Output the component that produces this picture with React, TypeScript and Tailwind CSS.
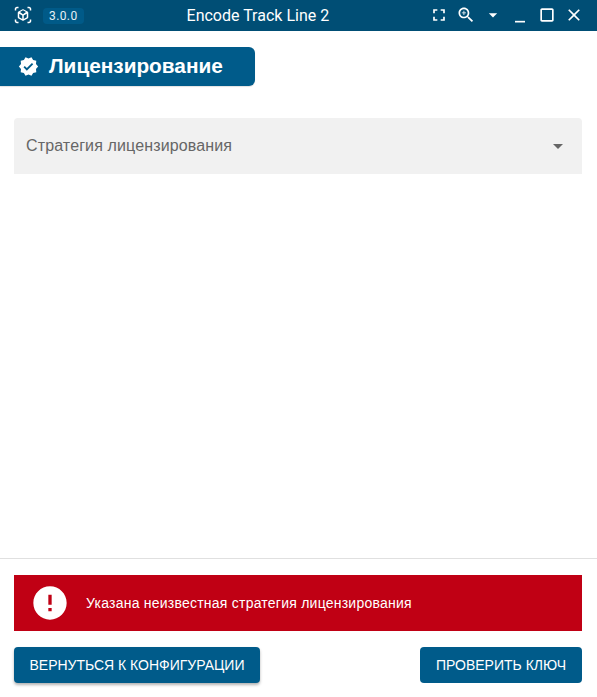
const icons = {
  viewInAr:
    "M3 4c0-.55.45-1 1-1h2V1H4C2.34 1 1 2.34 1 4v2h2V4zm0 16v-2H1v2c0 1.66 1.34 3 3 3h2v-2H4c-.55 0-1-.45-1-1zM20 1h-2v2h2c.55 0 1 .45 1 1v2h2V4c0-1.66-1.34-3-3-3zm1 19c0 .55-.45 1-1 1h-2v2h2c1.66 0 3-1.34 3-3v-2h-2v2zm-2-5.13V9.13c0-.72-.38-1.38-1-1.73l-5-2.88c-.31-.18-.65-.27-1-.27s-.69.09-1 .27L6 7.39c-.62.36-1 1.02-1 1.74v5.74c0 .72.38 1.38 1 1.73l5 2.88c.31.18.65.27 1 .27s.69-.09 1-.27l5-2.88c.62-.35 1-1.01 1-1.73zm-8 2.3l-4-2.3v-4.63l4 2.33v4.6zm1-6.33L8.04 8.1 12 5.81l3.96 2.29L12 10.84zm5 4.03l-4 2.3v-4.6l4-2.33v4.63z",
  fullscreen: "M7 14H5v5h5v-2H7v-3zm-2-4h2V7h3V5H5v5zm12 7h-3v2h5v-5h-2v3zM14 5v2h3v3h2V5h-5z",
  zoomIn:
    "M15.5 14h-.79l-.28-.27C15.41 12.59 16 11.11 16 9.5 16 5.91 13.09 3 9.5 3S3 5.91 3 9.5 5.91 16 9.5 16c1.61 0 3.09-.59 4.23-1.57l.27.28v.79l5 4.99L20.49 19l-4.99-5zm-6 0C7.01 14 5 11.99 5 9.5S7.01 5 9.5 5 14 7.01 14 9.5 11.99 14 9.5 14zm2.5-4h-2v2H9v-2H7V9h2V7h1v2h2v1z",
  dropDown: "M7 10l5 5 5-5z",
  minimize: "M6 19h12v2H6z",
  square: "M18 4H6c-1.1 0-2 .9-2 2v12c0 1.1.9 2 2 2h12c1.1 0 2-.9 2-2V6c0-1.1-.9-2-2-2zm0 14H6V6h12v12z",
  close:
    "M19 6.41L17.59 5 12 10.59 6.41 5 5 6.41 10.59 12 5 17.59 6.41 19 12 13.41 17.59 19 19 17.59 13.41 12z",
  verified:
    "M23 12l-2.44-2.79.34-3.69-3.61-.82-1.89-3.2L12 2.96 8.6 1.5 6.71 4.69 3.1 5.5l.34 3.7L1 12l2.44 2.79-.34 3.7 3.61.82L8.6 22.5l3.4-1.47 3.4 1.46 1.89-3.19 3.61-.82-.34-3.69L23 12zm-12.91 4.72l-3.8-3.81 1.48-1.48 2.32 2.33 5.85-5.87 1.48 1.48-7.33 7.35z",
  error:
    "M12 2C6.48 2 2 6.48 2 12s4.48 10 10 10 10-4.48 10-10S17.52 2 12 2zm1 15h-2v-2h2v2zm0-4h-2V7h2v6z",
};

function Icon({ d, className }: { d: string; className: string }) {
  return (
    <svg viewBox="0 0 24 24" fill="currentColor" className={className}>
      <path d={d} />
    </svg>
  );
}

export default function App() {
  return (
    <div className="flex h-[697px] flex-col bg-white font-['Roboto',sans-serif] text-white">
      {/* Title bar */}
      <header className="flex h-[31px] shrink-0 items-center bg-[#004e75]">
        <Icon d={icons.viewInAr} className="mb-[1px] ml-[14px] h-[18px] w-[18px]" />
        <span className="ml-[11px] rounded-[4px] bg-[#005a88] px-[6px] text-xs leading-[16px] tracking-[0.4px] text-[#e6f0f5]">
          3.0.0
        </span>
        <span className="ml-[103px] text-base leading-none">Encode Track Line 2</span>
        <div className="ml-auto mb-[2px] mr-[13px] flex items-center gap-[7px]">
          <Icon d={icons.fullscreen} className="h-5 w-5" />
          <Icon d={icons.zoomIn} className="h-5 w-5" />
          <Icon d={icons.dropDown} className="h-5 w-5" />
          <Icon d={icons.minimize} className="h-5 w-5" />
          <Icon d={icons.square} className="h-5 w-5" />
          <Icon d={icons.close} className="h-5 w-5" />
        </div>
      </header>

      {/* Section heading */}
      <div className="mt-4 flex h-[39px] w-[255px] items-center rounded-r-[6px] bg-[#005b8a] pb-[1px] pl-[18px] font-['Liberation_Sans',sans-serif] shadow-[0_1px_1px_rgba(0,0,0,0.12)]">
        <Icon d={icons.verified} className="h-[21px] w-[21px]" />
        <span className="ml-[10px] text-[20.8px] font-bold leading-none">Лицензирование</span>
      </div>

      {/* Strategy select */}
      <div className="ml-[14px] mr-[15px] mt-8 flex h-14 items-center justify-between rounded-t-[4px] bg-[#f1f1f1] pl-3 pr-3 font-['Liberation_Sans',sans-serif]">
        <span className="text-base leading-none tracking-[0.13px] text-[#666666]">Стратегия лицензирования</span>
        <Icon d={icons.dropDown} className="h-6 w-6 text-[#666666]" />
      </div>

      <div className="flex-1" />

      {/* Footer */}
      <footer className="border-t border-[#e0e0e0] pb-[14px] pl-[14px] pr-[15px] pt-4 font-['Liberation_Sans',sans-serif]">
        <div className="flex h-14 items-center bg-[#c00014] pl-4">
          <Icon d={icons.error} className="h-10 w-10" />
          <span className="ml-4 text-sm leading-none tracking-[0.23px]">
            Указана неизвестная стратегия лицензирования
          </span>
        </div>
        <div className="mt-4 flex justify-between">
          <button className="h-9 w-[246px] rounded-[4px] bg-[#005b8a] text-sm leading-none shadow-[0_2px_3px_rgba(0,0,0,0.3)]">
            ВЕРНУТЬСЯ К КОНФИГУРАЦИИ
          </button>
          <button className="h-9 rounded-[4px] bg-[#005b8a] px-4 text-sm leading-none">
            ПРОВЕРИТЬ КЛЮЧ
          </button>
        </div>
      </footer>
    </div>
  );
}
